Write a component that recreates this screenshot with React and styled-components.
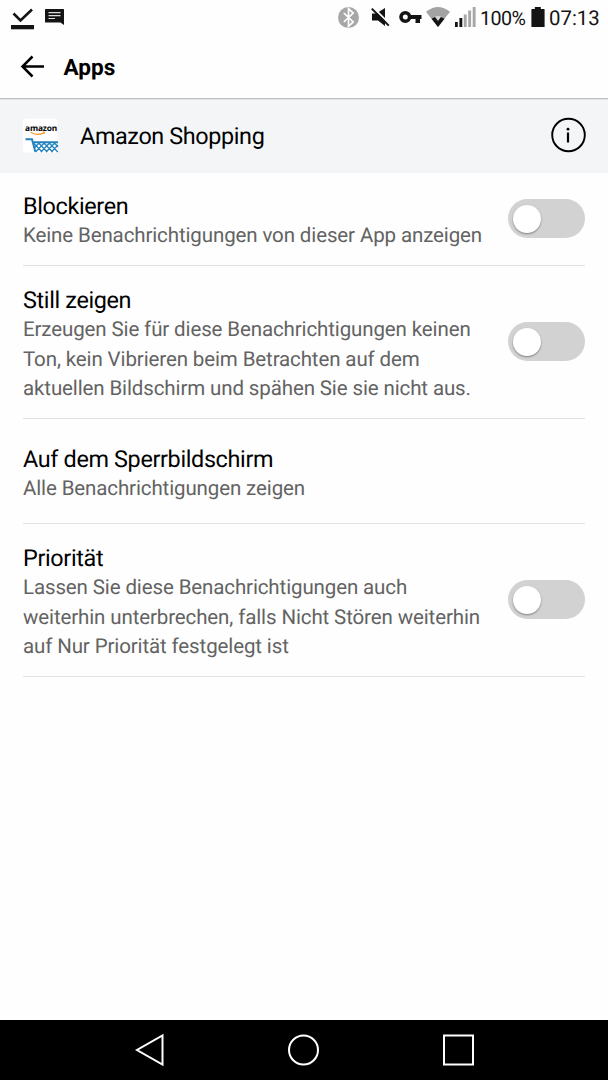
import React from "react";
import styled, { createGlobalStyle } from "styled-components";

const GlobalStyle = createGlobalStyle`
  * {
    box-sizing: border-box;
  }
  body {
    margin: 0;
    background-color: #fefefe;
    font-family: Roboto, "Noto Sans", sans-serif;
    color: #000;
    text-rendering: geometricPrecision;
  }
`;

const Screen = styled.div`
  width: 608px;
  height: 1080px;
  display: flex;
  flex-direction: column;
  overflow: hidden;
`;
const StatusBar = styled.div`
  height: 36px;
  display: flex;
  justify-content: space-between;
  padding: 0 9px 0 11px;
  color: #141414;
`;
const StatusGroup = styled.div`
  display: flex;
  align-items: center;
  height: 36px;
`;
const Glyph = styled.svg`
  display: block;
  flex: none;
  width: ${(props) => props.$width}px;
  height: 36px;
  margin-right: ${(props) => props.$gap || 0}px;
`;
const StatusText = styled.span`
  width: ${(props) => props.$width}px;
  margin-right: ${(props) => props.$gap || 0}px;
  padding-top: 1px;
  font-size: ${(props) => props.$size}px;
  letter-spacing: ${(props) => props.$tracking || 0}px;
  line-height: 35px;
  white-space: nowrap;
`;
const AppBar = styled.header`
  height: 62px;
  display: flex;
  align-items: center;
  padding-left: 20px;
`;
const BackButton = styled.button`
  display: flex;
  padding: 0;
  margin-right: 18.5px;
  border: none;
  background: none;
`;
const BarTitle = styled.h1`
  margin: 0;
  padding-top: 2px;
  font-size: 22.6px;
  font-weight: bold;
  line-height: 60px;
`;
const AppHeader = styled.div`
  height: 75px;
  display: flex;
  align-items: center;
  padding: 0 22px 0 23px;
  background-color: #f4f5f7;
  border-top: 1px solid #bfc0c1;
  box-shadow: inset 0 1px 0 #e3e4e6;
`;
const AppName = styled.div`
  flex: 1;
  margin-left: 21px;
  font-size: 23.4px;
  letter-spacing: -0.38px;
`;
const InfoButton = styled.button`
  display: flex;
  padding: 0;
  margin-bottom: 2px;
  border: none;
  background: none;
`;
const List = styled.main`
  flex: 1;
  padding: 0 23px;
`;
const Row = styled.section`
  height: ${(props) => props.$height}px;
  display: flex;
  align-items: center;
  justify-content: space-between;
  border-bottom: 1px solid #e1e1e1;
`;
const Texts = styled.div`
  align-self: flex-start;
  padding-top: ${(props) => props.$top}px;
`;
const RowTitle = styled.div`
  font-size: 23.4px;
  letter-spacing: -0.35px;
  line-height: 28px;
  white-space: nowrap;
`;
const Description = styled.div`
  padding-top: 2px;
  font-size: 20.5px;
  letter-spacing: -0.12px;
  line-height: 29.7px;
  color: #636363;
  white-space: pre;
`;
const Toggle = styled.button`
  flex: none;
  width: 77.5px;
  height: 39px;
  display: flex;
  align-items: center;
  padding: 0 5.5px;
  margin-bottom: 1px;
  border: none;
  border-radius: 20px;
  background-color: #d2d2d2;
`;
const Knob = styled.span`
  width: 28px;
  height: 28px;
  border-radius: 50%;
  background-color: #fff;
  box-shadow: 0 1px 2px rgba(0, 0, 0, 0.4);
`;
const NavBar = styled.nav`
  height: 60px;
  display: flex;
  align-items: center;
  justify-content: center;
  gap: 122px;
  background-color: #000;
`;

const settings = [
  {
    title: "Blockieren",
    text: "Keine Benachrichtigungen von dieser App anzeigen",
    height: 93,
    top: 19,
    toggle: true,
  },
  {
    title: "Still zeigen",
    text: "Erzeugen Sie für diese Benachrichtigungen keinen\nTon, kein Vibrieren beim Betrachten auf dem\naktuellen Bildschirm und spähen Sie sie nicht aus.",
    height: 153,
    top: 20,
    toggle: true,
  },
  {
    title: "Auf dem Sperrbildschirm",
    text: "Alle Benachrichtigungen zeigen",
    height: 105,
    top: 26,
    toggle: false,
  },
  {
    title: "Priorität",
    text: "Lassen Sie diese Benachrichtigungen auch\nweiterhin unterbrechen, falls Nicht Stören weiterhin\nauf Nur Priorität festgelegt ist",
    height: 153,
    top: 20,
    toggle: true,
  },
];

const StatusIcons = () => (
  <StatusBar>
    <StatusGroup>
      <Glyph $width={23} $gap={11} viewBox="0 0 23 36">
        <path d="M2.5 13.5l7 7L21 9.5" fill="none" stroke="#141414" strokeWidth="2.6" />
        <path d="M0 25h23v4.3H0z" fill="#141414" />
      </Glyph>
      <Glyph $width={19} viewBox="0 0 19 36">
        <path d="M.6 9h17.8a.6.6 0 0 1 .6.6V25l-3.6-2.500H.6a.6.6 0 0 1-.6-.6V9.600a.6.6 0 0 1 .6-.6z" fill="#141414" />
        <path d="M3.5 12.7h12M3.5 15.6h12M3.5 18.5h6.5" stroke="#ddd" strokeWidth="1.2" />
      </Glyph>
    </StatusGroup>
    <StatusGroup>
      <Glyph $width={21} $gap={12} viewBox="0 0 21 36">
        <circle cx="10.5" cy="17.5" r="10.5" fill="#a7a7a7" />
        <path d="M5.8 13l9.4 9-4.7 4.3V8.7l4.7 4.3-9.4 9" fill="none" stroke="#fff" strokeWidth="1.7" />
      </Glyph>
      <Glyph $width={19} $gap={9} viewBox="0 0 19 36">
        <path d="M1 13.5h4.2L14 8v18l-7-5.5H1z" fill="#141414" />
        <path d="M1.8 7.1L19 24.3" stroke="#fefefe" strokeWidth="2" />
        <path d="M.8 8.6l17 17" stroke="#141414" strokeWidth="2" />
      </Glyph>
      <Glyph $width={23} $gap={4} viewBox="0 0 23 36">
        <circle cx="6.3" cy="17" r="4.3" fill="none" stroke="#141414" strokeWidth="3.6" />
        <path d="M11 15h11.5v4H21v4h-4.5v-4H11z" fill="#141414" />
      </Glyph>
      <Glyph $width={24} $gap={5} viewBox="0 0 24 36">
        <path d="M0 11.7Q12 2.3 24 11.7L12 27z" fill="#a3a3a3" />
        <path d="M5.5 18.7Q12 14.700 18.5 18.7L12 27z" fill="#141414" />
        <path d="M8.800 16.600Q12 15.200 15.200 16.600L12 21z" fill="#d8d8d8" />
      </Glyph>
      <Glyph $width={21} $gap={4} viewBox="0 0 21 36">
        <path d="M0 22h2.8v5H0zM4.4 18h2.9v9H4.4z" fill="#141414" />
        <path d="M8.8 14.5h2.9V27H8.8zM13.2 10.5h2.9V27h-2.9zM17.7 7h2.9v20h-2.9z" fill="#a7a7a7" />
      </Glyph>
      <StatusText $width={46} $gap={5} $size={19.7} $tracking={-0.55}>
        100%
      </StatusText>
      <Glyph $width={14} $gap={4} viewBox="0 0 14 36">
        <path d="M3.8 7h6v2H13a.6.6 0 0 1 .6.6V27H.4V9.6a.6.6 0 0 1 .6-.6h2.8z" fill="#141414" />
      </Glyph>
      <StatusText $width={50} $size={20.4}>
        07:13
      </StatusText>
    </StatusGroup>
  </StatusBar>
);

const AmazonIcon = () => (
  <svg width="36" height="36" viewBox="0 0 36 36">
    <rect x="0" y="0.5" width="34.5" height="34" rx="2.5" fill="#fff" />
    <text x="2" y="13" fontSize="8.3" fontWeight="bold" fontFamily="Open Sans, sans-serif" letterSpacing="-0.1">
      amazon
    </text>
    <path d="M7.5 14.3c4 2.5 9 2.5 13.5.5" fill="none" stroke="#f39c2c" strokeWidth="1.3" />
    <path d="M19.5 13.9l2.3.1-.8 2" fill="none" stroke="#f39c2c" strokeWidth=".9" />
    <path d="M2.5 21.2H9l3.3 12.5M9.5 24.3h25.500" fill="none" stroke="#2483bf" strokeWidth="2" />
    <path
      d="M10.500 25l8.600 9M15.700 25l8.600 9M21 25l8.600 9M26.200 25l8.600 9M31.500 25l3.500 3.700M16 25l-4.800 5M21.200 25l-8.600 9M26.500 25l-8.600 9M31.700 25l-8.600 9M35 27l-6.700 7"
      fill="none"
      stroke="#2483bf"
      strokeWidth="1.3"
    />
  </svg>
);

const SettingRow = (props) => (
  <Row $height={props.height}>
    <Texts $top={props.top}>
      <RowTitle>{props.title}</RowTitle>
      <Description>{props.text}</Description>
    </Texts>
    {props.toggle && (
      <Toggle role="switch" aria-checked="false" aria-label={props.title}>
        <Knob />
      </Toggle>
    )}
  </Row>
);

const App = () => {
  return (
    <Screen>
      <GlobalStyle />
      <StatusIcons />
      <AppBar>
        <BackButton aria-label="Zurück">
          <svg width="25" height="24" viewBox="0 0 25 24">
            <path d="M24 11.5H2.5M12.5 1.5l-10 10 10 10" fill="none" stroke="#000" strokeWidth="2.5" />
          </svg>
        </BackButton>
        <BarTitle>Apps</BarTitle>
      </AppBar>
      <AppHeader>
        <AmazonIcon />
        <AppName>Amazon Shopping</AppName>
        <InfoButton aria-label="App-Info">
          <svg width="36" height="36" viewBox="0 0 36 36">
            <circle cx="18.5" cy="18" r="16.3" fill="none" stroke="#000" strokeWidth="1.9" />
            <circle cx="18" cy="12.2" r="1.4" />
            <path d="M18 15.5v10" stroke="#000" strokeWidth="2.2" />
          </svg>
        </InfoButton>
      </AppHeader>
      <List>
        {settings.map((item) => (
          <SettingRow key={item.title} {...item} />
        ))}
      </List>
      <NavBar>
        <svg width="32" height="34" viewBox="0 0 32 34">
          <path d="M28.5 2.5v29L3 17z" fill="none" stroke="#fff" strokeWidth="2" />
        </svg>
        <svg width="32" height="34" viewBox="0 0 32 34">
          <circle cx="15.5" cy="17" r="14.5" fill="none" stroke="#fff" strokeWidth="2" />
        </svg>
        <svg width="32" height="34" viewBox="0 0 32 34">
          <rect x="2" y="2.5" width="29" height="29" fill="none" stroke="#fff" strokeWidth="2" />
        </svg>
      </NavBar>
    </Screen>
  );
};

export default App;
